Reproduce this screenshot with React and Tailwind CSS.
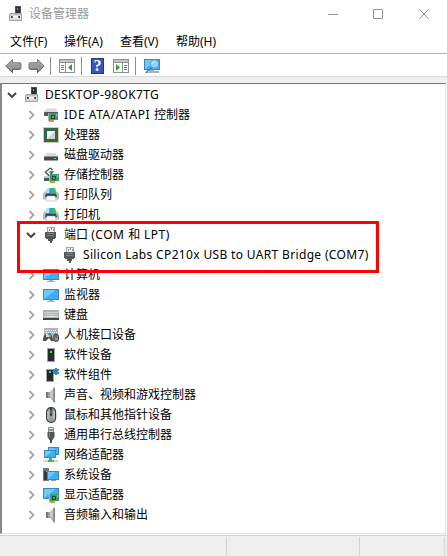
import React from "react";

const Svg = ({ children, className = "w-4 h-4" }) => (
  <svg viewBox="0 0 16 16" className={"block shrink-0 " + className}>{children}</svg>
);

const Board = ({ x = 5, y = 6 }) => (
  <g transform={`translate(${x} ${y})`} shapeRendering="crispEdges">
    <rect x="1" y="7" width="5" height="2" fill="#e09a16" />
    <rect x="0" y="0" width="10" height="7" fill="#3f9a6d" />
    <rect x="0" y="0" width="1" height="8" fill="#a9b3ae" />
    <rect x="3" y="2" width="4" height="4" fill="#1f4c3a" />
    <rect x="4" y="3" width="2" height="2" fill="#5f9c7c" />
    <rect x="8" y="1" width="1" height="2" fill="#8ad6a8" />
  </g>
);

const Screen = ({ x, y, w, h }) => (
  <g shapeRendering="crispEdges">
    <rect x={x} y={y} width={w} height={h} fill="#3f86b4" />
    <rect x={x + 1} y={y + 1} width={w - 2} height={h - 2} fill="#3bb0fa" />
    <path d={`M${x + 1} ${y + h - 1}V${y + 1}H${x + w - 3}Z`} fill="#6cc8ff" />
  </g>
);

const Computer = () => (
  <Svg>
    <g shapeRendering="crispEdges">
      <rect x="7" y="0" width="6" height="8" fill="#4b5154" />
      <rect x="8" y="1" width="4" height="7" fill="#2a2f31" />
      <rect x="9" y="2" width="1" height="2" fill="#36df3e" />
      <path d="M2 7h11l1 1v7H1V8z" fill="#a3a7aa" />
      <path d="M2 8h11v6H2z" fill="#d9dbdd" />
      <path d="M2 8h11v1H2z" fill="#bfc3c6" />
      <path d="M3 10h1v2H3zM11 10h1v2h-1z" fill="#35393c" />
      <path d="M4 10h1v2H4zM10 10h1v2h-1z" fill="#6b7073" />
      <path d="M5 10h5v2H5z" fill="#f4f4f4" />
    </g>
  </Svg>
);
const Ide = () => (
  <Svg>
    <path d="M3 1.5h10l2 3.5H1z" fill="#d9dcdd" />
    <rect x="1" y="5" width="14" height="4" rx=".5" fill="#55595b" />
    <Board x={5} y={6} />
  </Svg>
);
const Cpu = () => (
  <Svg>
    <rect x=".5" y=".5" width="15" height="15" fill="none" stroke="#b59a4a" strokeDasharray="1 1" />
    <rect x="1" y="1" width="14" height="14" fill="#31654e" />
    <rect x="4" y="4" width="8" height="8" fill="#d0d3d0" />
    <path d="M4 12V4h8z" fill="#f0f1f0" />
  </Svg>
);
const Disk = () => (
  <Svg>
    <path d="M3.5 6h9L15 10H1z" fill="#dadcdd" />
    <rect x="1" y="9.5" width="14" height="4" rx=".5" fill="#45494b" />
    <rect x="11" y="11" width="2" height="1" fill="#56db60" />
  </Svg>
);
const Storage = () => (
  <Svg>
    <path d="M7.5 1 2.3 5 6 8.8 9.8 5 6.5 5M7.5 1l2 2" fill="none" stroke="#4c5052" strokeWidth="1.3" />
    <path d="M1 9h6v2H1z" fill="#c8cbcd" />
    <path d="M1 11h6v3H1z" fill="#505456" />
    <Board x={6} y={7} />
  </Svg>
);
const Printer = () => (
  <Svg>
    <path d="M4 1h8l1 5H3z" fill="#2f9be0" />
    <path d="M9 1h3l1 5H9z" fill="#35bf60" />
    <path d="M4 1h2.500L6 6H3z" fill="#b9e2f6" />
    <path d="M1.500 4.500h1.800L3 6h10l-.3-1.500h1.800L16 7v5.500H0V7z" fill="#b5bbbf" />
    <path d="M3 6.500h10l1 3.500H2z" fill="#3b4145" />
    <path d="M4 9h8l1.200 5H2.800z" fill="#fafafa" stroke="#a1a5a7" strokeWidth=".5" />
  </Svg>
);
const Port = () => (
  <Svg>
    <g shapeRendering="crispEdges">
      <rect x="4" y="0" width="8" height="5" fill="#a3a6a8" />
      <rect x="5" y="1" width="6" height="4" fill="#f4f4f4" />
      <path d="M6 2h1v2H6zM8 1h1v2H8zM10 2h1v2h-1z" fill="#8b8e90" />
      <path d="M2 5h11v6h-1v1h-2v2H9v2H7v-2H5v-2H3v-1H2z" fill="#53585a" />
      <path d="M4 6h7v1H4zM4 8h7v1H4z" fill="#7d8183" />
    </g>
  </Svg>
);
const Monitor = () => (
  <Svg>
    <Screen x={0} y={2} w={16} h={11} />
    <path d="M6 13h4v1H6zM4 14h8v1H4z" fill="#a5afb5" />
  </Svg>
);
const Keyboard = () => (
  <Svg>
    <rect x="0" y="3" width="16" height="10" fill="#aeb4b9" />
    <path d="M1.5 5.5h13M2.5 7.5h12M1.5 9.5h13" stroke="#f4f4f4" strokeDasharray="1 1" />
    <path d="M0 11h16v2H0z" fill="#41464a" />
    <path d="M4 9.500h8" stroke="#eee" />
  </Svg>
);
const Hid = () => (
  <Svg>
    <rect x="1" y="1" width="14" height="9" fill="#b1b6ba" />
    <path d="M2 3.5h12M3 5.5h12" stroke="#fff" strokeDasharray="1 1" />
    <path d="M0 14c0-4 1-7 3-7h5l3 7H8l-2-3-3 3z" fill="#4d5356" />
    <path d="M3 7h4v3H3z" fill="#d8dbdd" />
    <path d="M5 6h3v2H5z" fill="#159fe7" />
    <path d="M6 8h2v2H6z" fill="#e28425" />
    <rect x="10.8" y="7" width="4.6" height="7.5" rx="2.2" fill="#8d9396" stroke="#34383b" />
    <path d="M13 7v4" stroke="#34383b" />
  </Svg>
);
const Tower = () => (
  <Svg>
    <g shapeRendering="crispEdges">
      <path d="M4 1h8v14H4z" fill="#9da2a4" />
      <path d="M5 2h6v12H5z" fill="#272d2e" />
      <rect x="7" y="4" width="2" height="2" fill="#37ee41" />
    </g>
  </Svg>
);
const Component = () => (
  <Svg>
    <g shapeRendering="crispEdges">
      <path d="M3 2h8v13H3z" fill="#9da2a4" />
      <path d="M4 3h6v11H4z" fill="#242b2c" />
      <rect x="6" y="4" width="2" height="2" fill="#35e83f" />
      <path d="M10 2h2V1h2v1h2v2h-1v1h1v2h-6V5h-1V4h1z" fill="#2f86c9" />
      <path d="M12 7h2v1h-2z" fill="#2f86c9" />
    </g>
  </Svg>
);
const Speaker = () => (
  <Svg>
    <path d="M3 5h4l4-4v14l-4-4H3z" fill="#9ca1a6" />
    <path d="M3 5h2v6H3z" fill="#74797e" />
    <path d="m7 5 3-3v11l-3-3z" fill="#c5c8cb" />
    <path d="M10.500 .5h1.500v15h-1.500z" fill="#85898d" />
  </Svg>
);
const Mouse = () => (
  <Svg>
    <rect x="3.6" y=".6" width="9" height="14.8" rx="4.3" fill="#999fa3" stroke="#393e41" strokeWidth="1.2" />
    <path d="M5 4v8M11 4v8" stroke="#d0d3d5" />
    <rect x="7" y="1" width="2.2" height="8" rx="1" fill="#353a3d" />
    <path d="M8 3v4" stroke="#a9afb2" strokeWidth=".7" />
  </Svg>
);
const Usb = () => (
  <Svg>
    <path d="M5.500.5h5V6h-5z" fill="#d2d4d5" stroke="#8a8e91" />
    <path d="M7 2v2M9 2v2" stroke="#55595b" />
    <path d="M4.500 5h7v5l-2 3h-3l-2-3z" fill="#515659" />
    <path d="M7 12h2v4H7z" fill="#44494c" />
    <path d="M6.500 6v4" stroke="#85898c" />
  </Svg>
);
const Network = () => (
  <Svg>
    <Screen x={5} y={0} w={11} h={8} />
    <Screen x={1} y={3} w={12} h={8} />
    <path d="M6 11h3v2h2v2H5v-2h1z" fill="#3fb95c" />
    <path d="M0 14h5M11 14h4" stroke="#b9cdbf" strokeWidth="1.500" />
  </Svg>
);
const System = () => (
  <Svg>
    <path d="M0 1h6v13H0z" fill="#71797e" />
    <path d="M1 2h4v11H1z" fill="#343b40" />
    <path d="M1 3h4" stroke="#aab0b3" />
    <rect x="3" y="4" width="1" height="1" fill="#45e34f" />
    <Screen x={4} y={4} w={12} h={9} />
    <path d="M8 13h5v1H8z" fill="#8ba2b0" />
  </Svg>
);
const Display = () => (
  <Svg>
    <Screen x={0} y={1} w={16} h={11} />
    <Board x={6} y={7} />
  </Svg>
);

const Chevron = ({ open }) => (
  <svg viewBox="0 0 10 10" className="block h-2.5 w-2.5 shrink-0" fill="none">
    {open
      ? <path d="m1 3 4 4 4-4" stroke="#404040" strokeWidth="1.9" />
      : <path d="m3.500 1 4 4-4 4" stroke="#a6a6a6" strokeWidth="1.8" />}
  </svg>
);

const Arrow = ({ right }) => (
  <svg viewBox="0 0 17 16" className={"block h-4 w-[17px] shrink-0 " + (right ? "-scale-x-100" : "")}>
    <path d="M.8 8 7.500 1.500v3.300H15q1 0 1 1v4.400q0 1-1 1H7.500v3.300z" fill="#999" stroke="#777" />
    <path d="M1.500 8.700 7.500 14.500v-3.300H15" fill="none" stroke="#5f5f5f" />
    <path d="M3 7.300 6.500 4v2H14" fill="none" stroke="#b0b0b0" strokeWidth=".8" />
  </svg>
);

const PaneIcon = ({ right }) => (
  <Svg>
    <g shapeRendering="crispEdges">
      <path d="M0 1h16v14H0z" fill="#8b9197" />
      <path d="M1 2h14v2H1z" fill="#c0c5ca" />
      <path d="M1 5h14v9H1z" fill="#fff" />
      <path d={right ? "M9 5h1v9H9z" : "M6 5h1v9H6z"} fill="#8b9197" />
      <path d={right ? "M11 7h3v1h-3zM11 9h3v1h-3zM11 11h3v1h-3z" : "M2 7h3v1H2zM2 9h3v1H2zM2 11h3v1H2z"} fill="#6d7780" />
    </g>
    <path d={right ? "m3 6 4 3.5L3 13z" : "m13 6-4 3.5 4 3.5z"} fill="#2c9c38" />
  </Svg>
);

const ScanIcon = () => (
  <svg viewBox="0 0 17 16" className="block h-4 w-[17px] shrink-0">
    <Screen x={0} y={1} w={16} h={11} />
    <path d="M5 12h5v1h5v2H1v-1h4z" fill="#a4b2bb" />
    <path d="m7.500 9.500-5.500 5" stroke="#4c7f9e" strokeWidth="1.600" />
    <circle cx="10.500" cy="6" r="4.200" fill="#8fd2fa" stroke="#6a98b3" />
    <path d="M8 6a3 3 0 0 1 3-2.500" fill="none" stroke="#d8f0fd" />
  </svg>
);

const Wide = ({ children }) => <span className="tracking-[0.55px]">{children}</span>;

const rows = [
  { key: "ide", label: <><Wide>IDE ATA/ATAPI </Wide>控制器</>, Icon: Ide },
  { key: "cpu", label: "处理器", Icon: Cpu },
  { key: "disk", label: "磁盘驱动器", Icon: Disk },
  { key: "storage", label: "存储控制器", Icon: Storage },
  { key: "queue", label: "打印队列", Icon: Printer },
  { key: "printer", label: "打印机", Icon: Printer },
  { key: "port", label: <><Wide>(COM </Wide>和<Wide> LPT)</Wide></>, prefix: "端口 ", Icon: Port, open: true },
  { key: "computer", label: "计算机", Icon: Monitor },
  { key: "monitor", label: "监视器", Icon: Monitor },
  { key: "keyboard", label: "键盘", Icon: Keyboard },
  { key: "hid", label: "人机接口设备", Icon: Hid },
  { key: "software", label: "软件设备", Icon: Tower },
  { key: "component", label: "软件组件", Icon: Component },
  { key: "sound", label: "声音、视频和游戏控制器", Icon: Speaker },
  { key: "mouse", label: "鼠标和其他指针设备", Icon: Mouse },
  { key: "usb", label: "通用串行总线控制器", Icon: Usb },
  { key: "network", label: "网络适配器", Icon: Network },
  { key: "system", label: "系统设备", Icon: System },
  { key: "display", label: "显示适配器", Icon: Display },
  { key: "audio", label: "音频输入和输出", Icon: Speaker },
];

const Separator = () => <div className="h-[18px] w-px shrink-0 bg-[#8e8e8e]" />;

export default function App() {
  return (
    <div className="relative flex h-[556px] w-[447px] flex-col overflow-hidden bg-white font-['Noto_Sans','Noto_Sans_CJK_SC',sans-serif] text-[12px] leading-5 whitespace-nowrap text-black">
      <header className="flex h-7 shrink-0 items-center pl-2 text-[#999]">
        <Computer />
        <span className="ml-[5px]">设备管理器</span>
        <svg viewBox="0 0 102 11" className="mr-[17px] ml-auto block h-[11px] w-[102px]" fill="none" stroke="#929292">
          <path d="M0 5.5h10M45.5.5h9v9h-9z" />
          <path d="m91.5.5 9 9m0-9-9 9" />
        </svg>
      </header>
      <nav className="flex h-[25px] shrink-0 items-center pb-px pl-2.5 pt-1">
        <span className="w-[54px]">文件(F)</span>
        <span className="w-14">操作(A)</span>
        <span className="w-14">查看(V)</span>
        <span>帮助(H)</span>
      </nav>
      <div className="flex h-6 shrink-0 items-center border-t border-b border-t-[#b0b3bd] border-b-[#d9d9d9] pt-px pl-[5px]">
        <Arrow />
        <span className="w-1.5" />
        <Arrow right />
        <span className="w-[5px]" />
        <Separator />
        <span className="w-2" />
        <PaneIcon />
        <span className="w-1.5" />
        <Separator />
        <span className="w-[9px]" />
        <span className="flex h-4 w-[13px] items-center justify-center border border-[#183b91] bg-[#3457bd] font-['Liberation_Serif',serif] text-[16px] leading-none font-bold text-white">?</span>
        <span className="w-[9px]" />
        <PaneIcon right />
        <span className="w-1.5" />
        <Separator />
        <span className="w-2" />
        <ScanIcon />
      </div>
      <div className="h-1.5 shrink-0 bg-[#efefef]" />
      <main className="flex h-[452px] shrink-0 bg-white pr-px pb-px">
        <div className="w-full border-t border-r border-b border-l-2 border-t-[#777] border-r-[#e0e0e0] border-b-[#e0e0e0] border-l-[#888] bg-white pt-px">
          <div className="flex h-5 items-center pl-[5px]">
            <Chevron open />
            <span className="w-[7px]" />
            <Computer />
            <span className="ml-[5px] tracking-[0.35px]">DESKTOP-98OK7TG</span>
          </div>
          {rows.map(({ key, label, prefix, Icon, open }) => (
            <React.Fragment key={key}>
              <div className="flex h-5 items-center pl-6">
                <Chevron open={open} />
                <span className="w-[7px]" />
                <Icon />
                <span className="ml-[5px]">{prefix}{label}</span>
              </div>
              {open && (
                <div className="flex h-5 items-center pl-[60px]">
                  <Port />
                  <span className="ml-[5px] tracking-[0.34px]">Silicon Labs CP210x USB to UART Bridge (COM7)</span>
                </div>
              )}
            </React.Fragment>
          ))}
        </div>
      </main>
      <footer className="flex min-h-0 flex-1 border-t border-[#d2d2d2] bg-[#efefef] pt-px">
        <div className="w-[227px] border-r border-[#d2d2d2]" />
        <div className="w-[133px] border-r border-[#d2d2d2]" />
        <div className="w-[85px] border-r border-[#d2d2d2]" />
      </footer>
      <div className="absolute top-[221px] left-[17px] h-[52px] w-[362px] border-3 border-[#ff0000]" />
    </div>
  );
}
